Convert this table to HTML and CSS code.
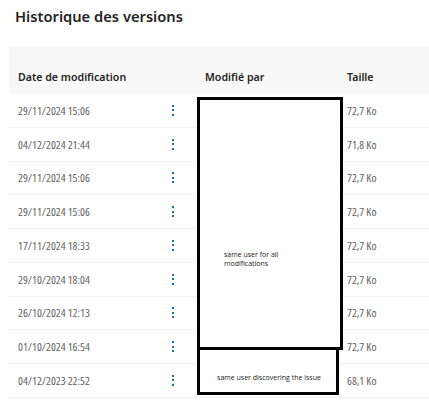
FILE: index.html
```html
<!DOCTYPE html>
<html lang="fr">
<head>
<meta charset="utf-8">
<link rel="stylesheet" href="styles.css">
</head>
<body>
<div class="page">
  <h1 class="title">Historique des versions</h1>
  <div class="table">
    <div class="head">
      <div class="c-date">Date de modification</div>
      <div class="c-menu"></div>
      <div class="c-user">Modifié par</div>
      <div class="c-size">Taille</div>
    </div>
    <div class="row"><div class="c-date">29/11/2024 15:06</div><div class="c-menu"><span class="kebab"><i></i><i></i><i></i></span></div><div class="c-user"></div><div class="c-size">72,7 Ko</div></div>
    <div class="row"><div class="c-date">04/12/2024 21:44</div><div class="c-menu"><span class="kebab"><i></i><i></i><i></i></span></div><div class="c-user"></div><div class="c-size">71,8 Ko</div></div>
    <div class="row"><div class="c-date">29/11/2024 15:06</div><div class="c-menu"><span class="kebab"><i></i><i></i><i></i></span></div><div class="c-user"></div><div class="c-size">72,7 Ko</div></div>
    <div class="row"><div class="c-date">29/11/2024 15:06</div><div class="c-menu"><span class="kebab"><i></i><i></i><i></i></span></div><div class="c-user"></div><div class="c-size">72,7 Ko</div></div>
    <div class="row"><div class="c-date">17/11/2024 18:33</div><div class="c-menu"><span class="kebab"><i></i><i></i><i></i></span></div><div class="c-user"></div><div class="c-size">72,7 Ko</div></div>
    <div class="row"><div class="c-date">29/10/2024 18:04</div><div class="c-menu"><span class="kebab"><i></i><i></i><i></i></span></div><div class="c-user"></div><div class="c-size">72,7 Ko</div></div>
    <div class="row"><div class="c-date">26/10/2024 12:13</div><div class="c-menu"><span class="kebab"><i></i><i></i><i></i></span></div><div class="c-user"></div><div class="c-size">72,7 Ko</div></div>
    <div class="row"><div class="c-date">01/10/2024 16:54</div><div class="c-menu"><span class="kebab"><i></i><i></i><i></i></span></div><div class="c-user"></div><div class="c-size">72,7 Ko</div></div>
    <div class="row"><div class="c-date">04/12/2023 22:52</div><div class="c-menu"><span class="kebab"><i></i><i></i><i></i></span></div><div class="c-user"></div><div class="c-size">68,1 Ko</div></div>
  </div>
  <div class="note note-all"><span>same user for all<br>modifications</span></div>
  <div class="note note-one"><span>same user discovering the issue</span></div>
</div>
</body>
</html>
```

FILE: styles.css
```css
* { box-sizing: border-box; }
html, body { margin: 0; padding: 0; background: #fff; }
body { width: 429px; height: 400px; overflow: hidden; font-family: "Open Sans", "Noto Sans", sans-serif; }
.page { position: relative; padding-top: 4px; }
.title {
  margin: 0 0 0 15px;
  font-family: "Noto Sans", "Open Sans", sans-serif;
  font-size: 14.7px;
  font-weight: 600;
  color: #252423;
  line-height: 24px;
}
.table { margin: 19px 0 0 9px; }
.head {
  display: flex;
  align-items: center;
  height: 47px;
  padding-top: 12px;
  background: #f8f8f8;
  font-family: "Noto Sans", "Open Sans", sans-serif;
  font-size: 10.6px;
  font-weight: 600;
  color: #252423;
}
.row {
  display: flex;
  align-items: center;
  height: 33.75px;
  border-bottom: 1px solid #f2f2f2;
  font-stretch: 81%;
  font-size: 11.5px;
  color: #616161;
}
.c-date { width: 153px; padding-left: 9px; white-space: nowrap; }
.c-menu { width: 43px; display: flex; padding-left: 10px; }
.c-user { width: 142px; }
.c-size { white-space: nowrap; }
.kebab { display: flex; flex-direction: column; gap: 2.5px; }
.kebab i { display: block; width: 2px; height: 2px; background: #1a73c8; }
.note {
  position: absolute;
  left: 197px;
  border: 3px solid #000;
  background: #fff;
  font-size: 7px;
  line-height: 9px;
  color: #222;
}
.note-all {
  top: 97px;
  width: 146px;
  height: 253px;
  padding: 150px 0 0 24px;
}
.note-one {
  top: 347px;
  width: 142px;
  height: 48px;
  display: flex;
  align-items: center;
  justify-content: center;
  padding: 12px 0 0 2px;
}
```
